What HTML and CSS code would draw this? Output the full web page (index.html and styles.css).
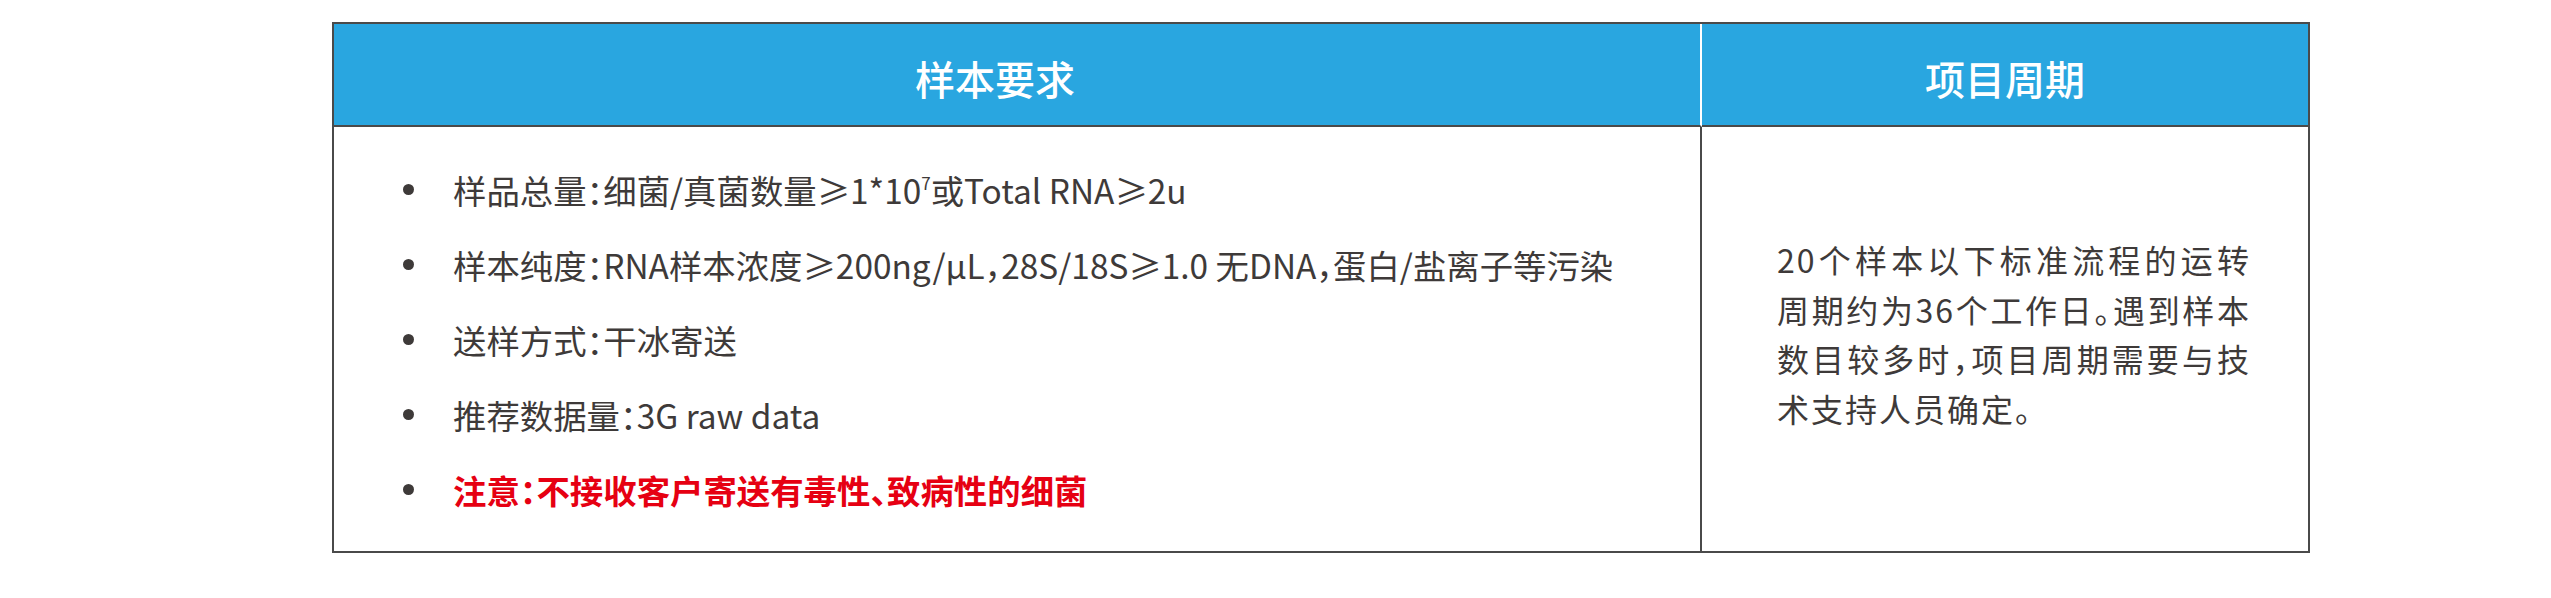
FILE: index.html
```html
<!DOCTYPE html>
<html lang="zh-CN">
<head>
<meta charset="utf-8">
<title>样本要求</title>
<link rel="stylesheet" href="styles.css">
</head>
<body>
<div class="spec-table">
  <div class="head head-req">样本要求</div>
  <div class="head head-cycle">项目周期</div>
  <div class="cell cell-req">
    <ul class="req-list">
      <li><span>样品总量：细菌/真菌数量≥1*10<sup class="sup">7</sup>或Total RNA≥2u</span></li>
      <li><span>样本纯度：RNA样本浓度≥200ng/μL，28S/18S≥1.0 无DNA，蛋白/盐离子等污染</span></li>
      <li><span>送样方式：干冰寄送</span></li>
      <li><span>推荐数据量：3G raw data</span></li>
      <li class="warn"><span>注意：不接收客户寄送有毒性、致病性的细菌</span></li>
    </ul>
  </div>
  <div class="cell cell-cycle">
    <p class="cycle-text">20个样本以下标准流程的运转周期约为36个工作日。遇到样本数目较多时，项目周期需要与技术支持人员确定。</p>
  </div>
</div>
</body>
</html>
```

FILE: styles.css
```css
html, body {
  margin: 0;
  padding: 0;
  background: #ffffff;
}

body {
  font-family: "Noto Sans CJK SC", "Noto Sans", sans-serif;
  color: #3e3a39;
}

.spec-table {
  margin: 22px 0 0 332px;
  width: 1978px;
  height: 531px;
  box-sizing: border-box;
  border: 2px solid #4a4a4a;
  display: grid;
  grid-template-columns: 1368px 1fr;
  grid-template-rows: 103px 1fr;
}

.head {
  background: #29a6e0;
  color: #ffffff;
  font-size: 40px;
  font-weight: 500;
  display: flex;
  align-items: center;
  justify-content: center;
  border-bottom: 2px solid #4a4a4a;
  padding-top: 6px;
  box-sizing: border-box;
}

.head-req {
  border-right: 2px solid #ffffff;
  padding-right: 44px;
}

.cell {
  display: flex;
  align-items: center;
  box-sizing: border-box;
}

.cell-req {
  border-right: 2px solid #4a4a4a;
  padding-left: 69px;
}

.req-list {
  list-style: none;
  margin: 0;
  padding: 0;
  font-size: 33.4px;
  line-height: 75px;
  font-feature-settings: "halt";
}

.req-list li {
  display: flex;
  align-items: center;
  gap: 39px;
  white-space: nowrap;
}

.req-list li::before {
  content: "";
  width: 11px;
  height: 11px;
  border-radius: 50%;
  background: #3e3a39;
  flex: none;
}

.sup {
  font-size: 17px;
  line-height: 0;
  vertical-align: 14px;
}

.req-list .warn {
  color: #e60012;
  font-weight: 700;
}

.cell-cycle {
  padding-left: 75px;
  padding-bottom: 10px;
}

.cycle-text {
  margin: 0;
  width: 474px;
  font-size: 32px;
  line-height: 49.5px;
  letter-spacing: 2px;
  text-align: justify;
  font-feature-settings: "halt";
}
```
